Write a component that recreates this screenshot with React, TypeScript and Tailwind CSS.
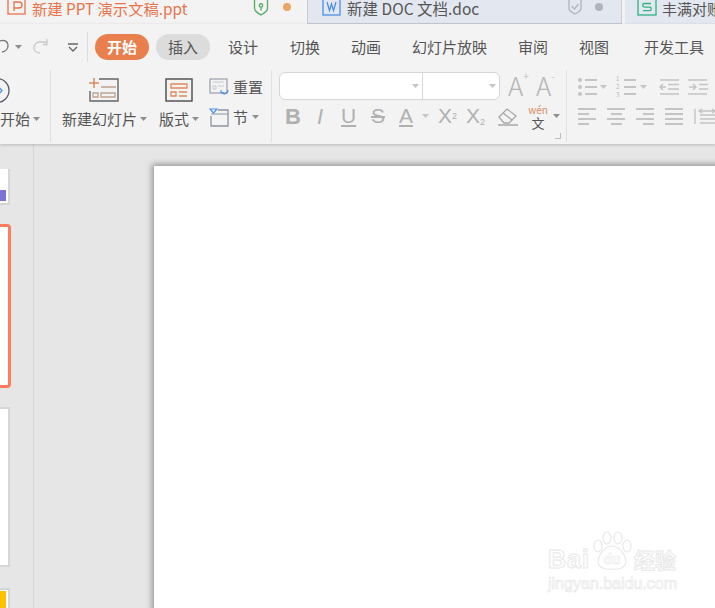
const cjk = "font-['Noto_Sans_CJK_SC','Noto_Sans',sans-serif]"

function Caret({ className = "", color = "#8f8f8f" }: { className?: string; color?: string }) {
  return (
    <svg width="7" height="4" viewBox="0 0 7 4" className={className}>
      <path d="M0 0h7L3.5 4z" fill={color} />
    </svg>
  )
}

function Line({ w, className = "" }: { w: string; className?: string }) {
  return <div className={`h-[2px] bg-[#c4c4c4] ${w} ${className}`} />
}

function Align({ kind }: { kind: "left" | "center" | "right" | "full" }) {
  const items = kind === "left" ? "items-start" : kind === "center" ? "items-center" : kind === "right" ? "items-end" : "items-stretch"
  return (
    <div className={`flex w-[18px] flex-col gap-[3px] ${items}`}>
      <Line w="w-[18px]" />
      <Line w={kind === "full" ? "w-[18px]" : "w-[11px]"} />
      <Line w="w-[18px]" />
      <Line w={kind === "full" ? "w-[18px]" : "w-[11px]"} />
    </div>
  )
}

function MenuItem({ label, className = "" }: { label: string; className?: string }) {
  return <span className={`text-[15px] leading-[26px] text-[#555] ${className}`}>{label}</span>
}

export default function App() {
  return (
    <div className={`relative h-[608px] w-[715px] overflow-hidden bg-[#e6e6e6] ${cjk}`}>
      {/* Tabs */}
      <div className="flex h-[24px] overflow-hidden bg-[#f3f3f3]">
        <div className="flex w-[307px] shrink-0 items-start">
          <svg width="20" height="18" viewBox="0 0 20 18" fill="none" stroke="#e8734a" strokeWidth="1.300" className="ml-[7px] mt-[-2px] shrink-0">
            <rect x="1" y="-2" width="17" height="18" />
            <path d="M7 13V4h5a2.500 2.500 0 0 1 0 6H7" />
          </svg>
          <span className="ml-[5px] text-[15.300px] leading-[17px] text-[#e8734a]">新建 PPT 演示文稿.ppt</span>
          <svg width="16" height="16" viewBox="0 0 16 16" fill="none" stroke="#5cae6a" strokeWidth="1.400" className="ml-[66px] shrink-0">
            <path d="M1.500 -1v9.500c0 3 3.500 4.800 6.500 6.500 3-1.700 6.500-3.500 6.500-6.500V-1" />
            <circle cx="8" cy="5.500" r="1.700" />
            <path d="M8 7.500v3" />
          </svg>
          <div className="ml-[14px] mt-[3px] h-[8px] w-[8px] rounded-full bg-[#eba564]" />
        </div>
        <div className="flex w-[315px] shrink-0 items-start border-x border-b border-[#c8cbd3] bg-[#e3e7ef]">
          <svg width="19" height="17" viewBox="0 0 19 17" fill="none" stroke="#4a90e8" strokeWidth="1.300" className="ml-[14px] mt-[-1px] shrink-0">
            <rect x="1" y="-2" width="17" height="18" />
            <path d="M5 3l2.500 8.500L9.500 5l2 6.500L14 3" />
          </svg>
          <span className="ml-[6px] text-[15.500px] leading-[17px] text-[#555]">新建 DOC 文档.doc</span>
          <svg width="14" height="15" viewBox="0 0 14 15" fill="none" stroke="#b3b3b8" strokeWidth="1.300" className="ml-[89px] shrink-0">
            <path d="M1 -1v9.500c0 2.500 3 4 6 5.500 3-1.500 6-3 6-5.500V-1" />
            <path d="M3.500 6l3 3 4-5" />
          </svg>
          <div className="ml-[13px] mt-[3px] h-[8px] w-[8px] rounded-full bg-[#b0b3ba]" />
        </div>
        <div className="ml-[3px] flex flex-1 items-start bg-[#e3e7ef]">
          <svg width="20" height="17" viewBox="0 0 20 17" fill="none" stroke="#2fb380" strokeWidth="1.300" className="ml-[12px] mt-[-1px] shrink-0">
            <rect x="1" y="-2" width="18" height="18" />
            <path d="M14 4.500H7.500a1.800 1.800 0 0 0 0 3.600h5a1.800 1.800 0 0 1 0 3.600H6" />
          </svg>
          <span className="ml-[5px] whitespace-nowrap text-[15px] leading-[17px] text-[#555]">丰满对账</span>
        </div>
      </div>

      {/* Ribbon */}
      <div className="relative z-10 h-[120px] bg-[#f3f3f3] shadow-[0_1px_3px_rgba(0,0,0,0.2)]">
        {/* Menu row */}
        <div className="flex h-[46px] items-center pb-[6px] pt-[6px]">
          <svg width="12" height="16" viewBox="0 0 12 16" fill="none" stroke="#777" strokeWidth="1.300" className="shrink-0">
            <path d="M-2 3c4-3 10-2 10 4 0 3-3 6-6 6" />
          </svg>
          <Caret className="ml-[3px]" />
          <svg width="16" height="16" viewBox="0 0 16 16" fill="none" stroke="#c9c9c9" strokeWidth="1.300" className="ml-[11px] shrink-0">
            <path d="M7 14C3 14 1 11.500 1 8.500S3.500 3 7 3h7" />
            <path d="M14 0v5.500h-4" />
          </svg>
          <svg width="10" height="9" viewBox="0 0 10 9" fill="none" stroke="#666" strokeWidth="1.300" className="ml-[19px] shrink-0">
            <path d="M0 1h10M1 4l4 4 4-4" />
          </svg>
          <div className="ml-[9px] h-[30px] w-px bg-[#dedede]" />
          <span className="ml-[7px] flex h-[26px] w-[54px] items-center justify-center rounded-full bg-[#e87f4d] text-[15px] font-bold text-white">开始</span>
          <span className="ml-[7px] flex h-[26px] w-[54px] items-center justify-center rounded-full bg-[#dcdcdc] text-[15px] text-[#555]">插入</span>
          <MenuItem label="设计" className="ml-[18px]" />
          <MenuItem label="切换" className="ml-[32px]" />
          <MenuItem label="动画" className="ml-[31px]" />
          <MenuItem label="幻灯片放映" className="ml-[31px]" />
          <MenuItem label="审阅" className="ml-[31px]" />
          <MenuItem label="视图" className="ml-[31px]" />
          <MenuItem label="开发工具" className="ml-[35px]" />
        </div>

        {/* Tool row */}
        <div className="flex h-[72px]">
          {/* Slideshow group */}
          <div className="w-[51px] shrink-0 border-r border-[#e0e0e0]">
            <div className="h-[33px] pt-[8px]">
              <svg width="10" height="25" viewBox="0 0 10 25" fill="none" stroke="#555a66" strokeWidth="1.300">
                <circle cx="-3" cy="12.500" r="12" />
                <path d="M-1 9l3 3.500-3 3.500" stroke="#4a90e8" />
              </svg>
            </div>
            <div className="mt-[4px] flex items-center">
              <span className="text-[15px] leading-[24px] text-[#555]">开始</span>
              <Caret className="ml-[3px]" />
            </div>
          </div>

          {/* Slides group */}
          <div className="flex w-[221px] shrink-0 border-r border-[#e0e0e0]">
            <div className="ml-[11px] flex w-[86px] flex-col">
              <div className="flex h-[37px] justify-center pr-[3px] pt-[7px]">
                <svg width="30" height="25" viewBox="0 0 30 25" fill="none">
                  <path d="M0 6h10M5 1v10" stroke="#e08a5c" strokeWidth="1.500" />
                  <path d="M10 2h19v22H1V14" stroke="#666" strokeWidth="1.400" />
                  <path d="M12 10h15M4 16h5v4H4zM12 16h14v4H12z" stroke="#bfa38f" strokeWidth="1.300" />
                </svg>
              </div>
              <div className="flex items-center">
                <span className="whitespace-nowrap text-[15px] leading-[24px] text-[#555]">新建幻灯片</span>
                <Caret className="ml-[3px]" />
              </div>
            </div>
            <div className="ml-[11px] flex w-[40px] flex-col">
              <div className="h-[37px] pl-[6px] pt-[8px]">
                <svg width="28" height="24" viewBox="0 0 28 24" fill="none">
                  <rect x="1" y="1" width="26" height="22" stroke="#555" strokeWidth="1.500" />
                  <path d="M6 6h16v4H6zM6 14h5v4H6zM14 14h8M14 18h8" stroke="#e08a5c" strokeWidth="1.300" />
                </svg>
              </div>
              <div className="flex items-center">
                <span className="whitespace-nowrap text-[15px] leading-[24px] text-[#555]">版式</span>
                <Caret className="ml-[3px]" />
              </div>
            </div>
            <div className="ml-[10px] flex flex-col pt-[7px]">
              <div className="flex h-[20px] items-center">
                <svg width="20" height="18" viewBox="0 0 20 18" fill="none">
                  <rect x="1" y="1" width="17" height="14" stroke="#9aa0ab" strokeWidth="1.200" />
                  <path d="M4 4h11M4 8h3v3H4zM9 8h6" stroke="#c4c8cf" strokeWidth="1" />
                  <path d="M19 12c0 4-5 5-7 2M12 12v2.500h2.500" stroke="#4a90e8" strokeWidth="1.200" />
                </svg>
                <span className="ml-[4px] text-[15px] leading-[20px] text-[#555]">重置</span>
              </div>
              <div className="mt-[10px] flex h-[20px] items-center">
                <svg width="20" height="19" viewBox="0 0 20 19" fill="none">
                  <path d="M1 1h7L4.500 5z" stroke="#4a90e8" strokeWidth="1.200" />
                  <path d="M9 2h10v16H2V8" stroke="#8d93a0" strokeWidth="1.300" />
                  <path d="M2 6h17" stroke="#8d93a0" strokeWidth="1" />
                </svg>
                <span className="ml-[4px] text-[15px] leading-[20px] text-[#555]">节</span>
                <Caret className="ml-[4px]" />
              </div>
            </div>
          </div>

          {/* Font group */}
          <div className="relative w-[295px] shrink-0 border-r border-[#e0e0e0]">
            <div className="flex h-[31px] items-start pl-[7px] pt-[2px]">
              <div className="flex h-[28px] w-[221px] rounded-[6px] border border-[#d6d6d6] bg-white">
                <div className="flex w-[143px] items-center justify-end border-r border-[#d6d6d6] pr-[3px]"><Caret color="#c4c4c4" /></div>
                <div className="flex flex-1 items-center justify-end pr-[3px]"><Caret color="#c4c4c4" /></div>
              </div>
              <div className="ml-[8px] flex w-[28px] items-start">
                <span className="text-[26px] leading-[26px] font-light text-[#b5b5b5]">A</span>
                <span className="mt-[-2px] text-[10px] leading-[12px] text-[#c5c5c5]">+</span>
              </div>
              <div className="flex w-[28px] items-start">
                <span className="text-[26px] leading-[26px] font-light text-[#b5b5b5]">A</span>
                <span className="mt-[-2px] text-[10px] leading-[12px] text-[#c5c5c5]">-</span>
              </div>
            </div>
            <div className="mt-[3px] flex h-[24px] items-center pl-[13px] text-[#b0b0b0]">
              <span className="w-[32px] font-['Liberation_Sans',sans-serif] text-[22px] font-bold">B</span>
              <span className="w-[24px] font-['Liberation_Sans',sans-serif] text-[22px] italic">I</span>
              <span className="w-[30px] font-['Liberation_Sans',sans-serif] text-[21px] underline">U</span>
              <span className="w-[28px] font-['Liberation_Sans',sans-serif] text-[21px] line-through">S</span>
              <span className="w-[23px] font-['Liberation_Sans',sans-serif] text-[21px] underline">A</span>
              <Caret color="#c4c4c4" />
              <span className="ml-[9px] w-[28px] font-['Liberation_Sans',sans-serif] text-[21px] leading-[24px]">X<sup className="text-[9px]">2</sup></span>
              <span className="w-[31px] font-['Liberation_Sans',sans-serif] text-[21px] leading-[24px]">X<sub className="text-[9px]">2</sub></span>
              <svg width="22" height="20" viewBox="0 0 22 20" fill="none" stroke="#a8a8a8" strokeWidth="1.300">
                <path d="M2 11l8-8 9 7-7 7H7zM6 7l9 7M1 19h20" />
              </svg>
              <div className="ml-[9px] flex w-[20px] flex-col items-center">
                <span className="text-[10px] leading-[13px] text-[#d98a5e]">wén</span>
                <span className="text-[13px] leading-[14px] text-[#555]">文</span>
              </div>
              <Caret className="ml-[5px]" />
            </div>
            <svg width="6" height="6" viewBox="0 0 6 6" fill="none" stroke="#bdbdbd" className="absolute bottom-[3px] right-[5px]">
              <path d="M5.500 0v5.500H0" />
            </svg>
          </div>

          {/* Paragraph group */}
          <div className="flex flex-col pl-[11px]">
            <div className="flex h-[31px] items-center pt-[2px]">
              <div className="flex items-center">
                <div className="flex flex-col gap-[3px]">
                  <Line w="w-[4px]" className="h-[4px] rounded-full" />
                  <Line w="w-[4px]" className="h-[4px] rounded-full" />
                  <Line w="w-[4px]" className="h-[4px] rounded-full" />
                </div>
                <div className="ml-[3px] flex flex-col gap-[5px]">
                  <Line w="w-[12px]" />
                  <Line w="w-[12px]" />
                  <Line w="w-[12px]" />
                </div>
                <Caret className="ml-[3px]" color="#c4c4c4" />
              </div>
              <div className="ml-[9px] flex items-center">
                <div className="w-[6px] text-[6px] leading-[8px] text-[#b5b5b5]">1<br />2<br />3</div>
                <div className="ml-[2px] flex flex-col gap-[5px]">
                  <Line w="w-[12px]" />
                  <Line w="w-[12px]" />
                  <Line w="w-[12px]" />
                </div>
                <Caret className="ml-[4px]" color="#c4c4c4" />
              </div>
              <svg width="20" height="16" viewBox="0 0 20 16" fill="none" stroke="#c4c4c4" strokeWidth="1.500" className="ml-[12px]">
                <path d="M1 1h19M9 5.500h11M9 10h11M1 15h19M7 8H1m3-3L1 8l3 3" />
              </svg>
              <svg width="20" height="16" viewBox="0 0 20 16" fill="none" stroke="#c4c4c4" strokeWidth="1.500" className="ml-[9px]">
                <path d="M0 1h19M11 5.500h9M11 10h9M0 15h19M1 8h7M5 5l3 3-3 3" />
              </svg>
            </div>
            <div className="mt-[5px] flex h-[20px] items-center gap-[11px]">
              <Align kind="left" />
              <Align kind="center" />
              <Align kind="right" />
              <Align kind="full" />
              <svg width="22" height="17" viewBox="0 0 22 17" fill="none" stroke="#c4c4c4" strokeWidth="1.400" className="shrink-0">
                <path d="M1 1v15M6 7h16M6 11h16M6 15h16M5 3h16M8 1L5 3l3 2M18 1l3 2-3 2" />
              </svg>
            </div>
          </div>
        </div>
      </div>

      {/* Workspace */}
      <div className="flex h-[464px]">
        <div className="flex w-[34px] shrink-0 flex-col border-r border-[#d5d5d5] pt-[25px]">
          <div className="h-[36px] w-[10px] border-r-2 border-b-2 border-[#d6d6d6] bg-white pt-[21px]">
            <div className="h-[11px] w-[6px] bg-[#7b74d6]" />
          </div>
          <div className="mt-[19px] h-[164px] w-[11px] rounded-r-[4px] border-y-[3px] border-r-[3px] border-[#ff7c5c] bg-white" />
          <div className="mt-[19px] h-[160px] w-[10px] border-y-2 border-r-2 border-[#d6d6d6] bg-white" />
          <div className="mt-[21px] w-[10px] flex-1 border-t-2 border-r-2 border-[#d6d6d6] bg-white pt-[1px]">
            <div className="h-full w-[6px] bg-[#ffc000]" />
          </div>
        </div>
        <div className="flex-1 pl-[120px] pt-[22px]">
          <div className="h-[600px] w-[700px] bg-white shadow-[-2px_-2px_6px_rgba(0,0,0,0.35)]" />
        </div>
      </div>

      {/* Watermark */}
      <div className="absolute left-[548px] top-[531px] w-[135px] text-white">
        <div className="flex items-end">
          <span className="font-['Liberation_Sans',sans-serif] text-[25px] leading-[28px] font-bold tracking-[1px] [-webkit-text-stroke:1px_#e8e8e8]">Bai</span>
          <svg width="44" height="42" viewBox="0 0 44 42" fill="none" stroke="#e8e8e8" strokeWidth="1.200" className="shrink-0">
            <ellipse cx="8" cy="15" rx="4" ry="6" />
            <ellipse cx="17" cy="7" rx="4" ry="6" />
            <ellipse cx="28" cy="7" rx="4" ry="6" />
            <ellipse cx="37" cy="15" rx="4" ry="6" />
            <path d="M22 15c7 0 13 8 14 15 0 7-8 9-14 8-6 1-14-1-14-8 1-7 7-15 14-15z" />
            <text x="22" y="33" textAnchor="middle" fontSize="13" fontWeight="700" fill="white" stroke="#e8e8e8" strokeWidth="0.600">du</text>
          </svg>
          <span className="text-[21px] leading-[28px] font-bold whitespace-nowrap [-webkit-text-stroke:1px_#e8e8e8]">经验</span>
        </div>
        <div className="mt-[3px] font-['Liberation_Sans',sans-serif] text-[16px] leading-[16px] whitespace-nowrap [-webkit-text-stroke:0.7px_#e8e8e8]">jingyan.baidu.com</div>
      </div>
    </div>
  )
}
